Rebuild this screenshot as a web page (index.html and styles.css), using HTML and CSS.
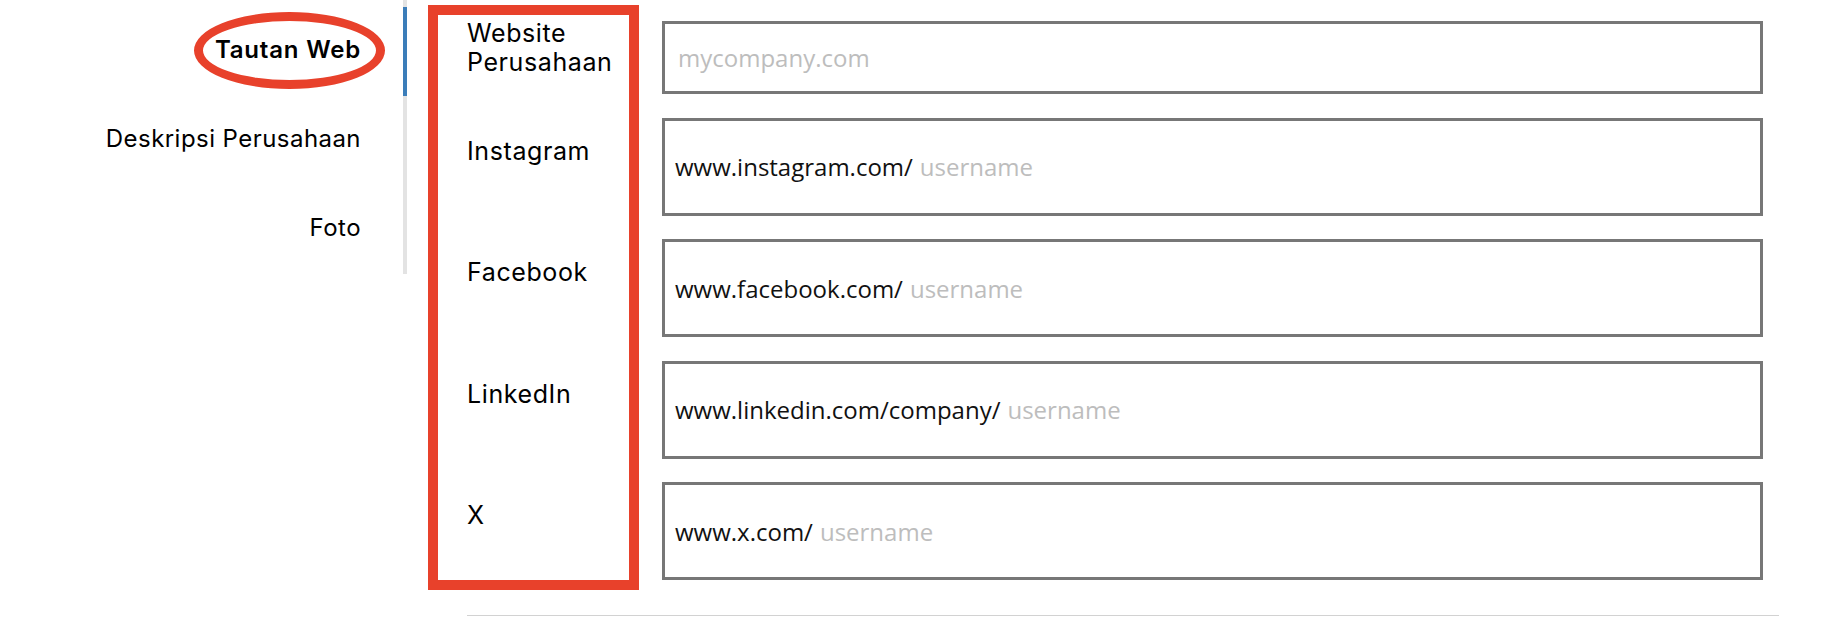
FILE: index.html
```html
<!DOCTYPE html>
<html lang="id">
<head>
  <meta charset="UTF-8">
  <meta name="viewport" content="width=device-width, initial-scale=1.0">
  <title>Tautan Web</title>
  <link rel="stylesheet" href="styles.css">
</head>
<body>
  <div class="page">
    <nav class="side-nav">
      <ul>
        <li class="active">Tautan Web</li>
        <li>Deskripsi Perusahaan</li>
        <li>Foto</li>
      </ul>
    </nav>

    <form class="links-form">
      <div class="field field-site">
        <span class="field-label">Website Perusahaan</span>
        <label class="input-box">
          <input type="text" placeholder="mycompany.com">
        </label>
      </div>
      <div class="field">
        <span class="field-label">Instagram</span>
        <label class="input-box">
          <span class="prefix">www.instagram.com/</span>
          <input type="text" placeholder="username">
        </label>
      </div>
      <div class="field">
        <span class="field-label">Facebook</span>
        <label class="input-box">
          <span class="prefix">www.facebook.com/</span>
          <input type="text" placeholder="username">
        </label>
      </div>
      <div class="field">
        <span class="field-label">LinkedIn</span>
        <label class="input-box">
          <span class="prefix">www.linkedin.com/company/</span>
          <input type="text" placeholder="username">
        </label>
      </div>
      <div class="field">
        <span class="field-label">X</span>
        <label class="input-box">
          <span class="prefix">www.x.com/</span>
          <input type="text" placeholder="username">
        </label>
      </div>
    </form>
  </div>

  <!-- red highlight marks drawn on top -->
  <span class="mark mark-circle"></span>
  <span class="mark mark-box"></span>
</body>
</html>
```

FILE: styles.css
```css
body {
  margin: 0;
  background: #fff;
  color: #111;
  font-family: "Inter", sans-serif;
  overflow: hidden;
}
.page {
  display: flex;
  align-items: flex-start;
}

/* left menu with the progress track */
.side-nav {
  width: 407px;
  flex-shrink: 0;
}
.side-nav ul {
  list-style: none;
  margin: 0;
  padding: 7px 0 0;
  border-right: 4px solid #e3e3e3;
}
.side-nav li {
  box-sizing: border-box;
  height: 89px;
  display: flex;
  align-items: center;
  justify-content: flex-end;
  padding: 0 42px 4px 0;
  margin-right: -4px;
  border-right: 4px solid transparent;
  font-size: 24px;
  letter-spacing: 0.45px;
  color: #000;
}
.side-nav li.active {
  border-right-color: #3b7db9;
  font-weight: 600;
  letter-spacing: 0.8px;
}

/* link fields */
.links-form {
  width: 1312px;
  margin-left: 60px;
  padding: 17px 0 35px;
  border-bottom: 1px solid #d2d2d2;
}
.field {
  display: flex;
  align-items: flex-start;
}
.field + .field {
  margin-top: 23.5px;
}
.field-label {
  width: 195px;
  flex-shrink: 0;
  padding-top: 19px;
  font-size: 25px;
  line-height: 29px;
  letter-spacing: 0.6px;
  color: #000;
}
.field-site .field-label {
  padding-top: 2px;
}
.input-box {
  width: 1101px;
  height: 98px;
  box-sizing: border-box;
  border: 3px solid #777;
  display: flex;
  align-items: center;
  padding: 0 10px;
  font-family: "Open Sans", sans-serif;
  font-size: 24px;
  color: #111;
}
.field-site .input-box {
  height: 73px;
  margin-top: 4px;
  padding-left: 13px;
}
.prefix {
  margin-right: 7px;
  white-space: nowrap;
}
.input-box input {
  flex: 1;
  min-width: 0;
  border: none;
  outline: none;
  padding: 0;
  background: transparent;
  font: inherit;
  color: #111;
}
.input-box input::placeholder {
  color: #bdbdbd;
}

/* highlight marks */
.mark {
  position: absolute;
  box-sizing: border-box;
  border: 10px solid #e8412b;
}
.mark-circle {
  left: 194px;
  top: 12px;
  width: 191px;
  height: 77px;
  border-width: 9px;
  border-radius: 50%;
}
.mark-box {
  left: 428px;
  top: 5px;
  width: 211px;
  height: 585px;
}
```
